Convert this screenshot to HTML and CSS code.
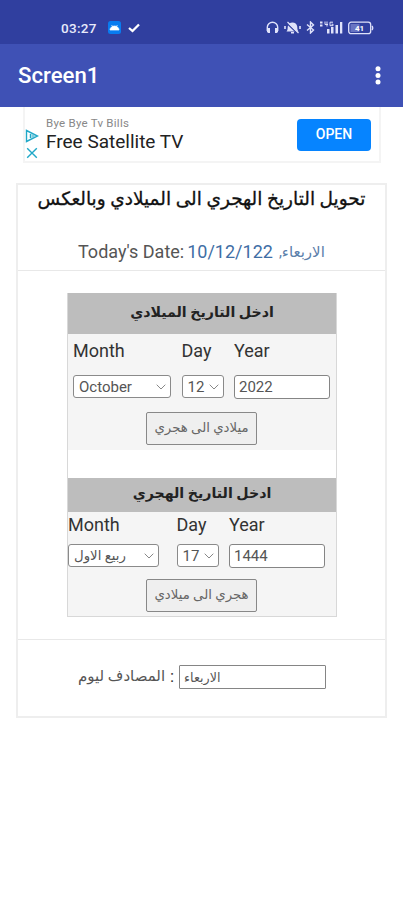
FILE: index.html
```html
<!DOCTYPE html>
<html lang="en">
<head>
    <meta charset="utf-8">
    <title>Screen1</title>
    <link rel="stylesheet" href="styles.css">
</head>
<body>
    <div class="statusbar">
        <span class="clock">03:27</span>
        <svg class="app-icon" width="13" height="13" viewBox="0 0 13 13"><rect width="13" height="13" rx="2.5" fill="#087cf0"/><path d="M2 9a4.5 4 0 0 1 9 0zM3.6 4l1 1.7M9.4 4l-1 1.7" fill="#fff" stroke="#fff" stroke-width=".7"/></svg>
        <svg class="check" width="12" height="10" viewBox="0 0 12 10"><path d="M1 5l3.5 3L11 1.5" fill="none" stroke="#fff" stroke-width="2.3"/></svg>
        <div class="status-right">
            <svg width="13" height="13" viewBox="0 0 13 13"><path d="M1.3 10V6.3a5.2 5 0 0 1 10.4 0V10" fill="none" stroke="#dfe2fa" stroke-width="1.4"/><path d="M1 7h3v5H2.2L1 11zM12 7H9v5h1.8l1.2-1z" fill="#dfe2fa"/></svg>
            <svg width="17" height="13" viewBox="0 0 17 13"><path d="M2.5 10.500c1.500-1.500 1-3.500 1.300-5C4.200 3 6 1.500 8.500 1.500s4.300 1.500 4.700 4c.3 1.500-.2 3.500 1.300 5zM7 11h3v1.500H7z" fill="#dfe2fa"/><path d="M1 5v3M16 5v3" stroke="#dfe2fa" stroke-width="1.6"/><path d="M2.500 2l11 10.500" stroke="#303f9f" stroke-width="1.300"/><path d="M3.500 1l11 11" stroke="#dfe2fa" stroke-width="1.200"/></svg>
            <svg class="bluetooth" width="9" height="13" viewBox="0 0 9 13"><path d="M1 3.500l6.500 5.500-3 3V1l3 3L1 9.500" fill="none" stroke="#dfe2fa" stroke-width="1.400"/></svg>
            <svg class="signal" width="23" height="13" viewBox="0 0 23 13"><g fill="#dfe2fa"><path d="M0 .5h2.500v2H0zM0 3.500h2.500v2H0zM7 8h2.500v4.500H7zM11 6h2.500v6.500H11zM15.500 4h2.500v8.500h-2.500zM20 1h2.300v11.500H20z"/></g><path d="M5 .5v3h3M7 .5v5M13 1.200h-3v3.500h3V3.200h-1.500" fill="none" stroke="#dfe2fa"/></svg>
            <svg width="26" height="14" viewBox="0 0 26 14"><rect x=".7" y="1.200" width="22" height="11.500" rx="2.500" fill="none" stroke="#dfe2fa" stroke-width="1.300"/><rect x="2.500" y="3" width="9" height="8" fill="#6974c2"/><path d="M24 5q1.500 2 0 4" stroke="#dfe2fa" fill="none" stroke-width="1.300"/><text class="battery-text" x="11.500" y="10">41</text></svg>
        </div>
    </div>
    <div class="appbar">
        <span class="app-title">Screen1</span>
        <svg width="6" height="20" viewBox="0 0 6 20"><g fill="#fff"><circle cx="3" cy="3.800" r="2.500"/><circle cx="3" cy="10.500" r="2.500"/><circle cx="3" cy="17" r="2.500"/></g></svg>
    </div>

    <div class="ad">
        <div class="ad-marks">
            <svg width="14" height="14" viewBox="0 0 14 14"><path d="M1.500 1.500v11L12.500 7zM5.500 5v4" fill="none" stroke="#20a8c8" stroke-width="1.400"/><path d="M6.500 4.500v5l4-2.500z" fill="#7dcde0"/></svg>
            <svg width="12" height="12" viewBox="0 0 12 12"><path d="M1.200 1.200l9.600 9.600M10.800 1.200l-9.600 9.600" stroke="#20a8c8" stroke-width="1.400"/></svg>
        </div>
        <div class="ad-text">
            <div class="ad-small">Bye Bye Tv Bills</div>
            <div class="ad-big">Free Satellite TV</div>
        </div>
        <a class="ad-open">OPEN</a>
    </div>

    <div class="card">
        <div class="card-head">
            <h1 class="title" dir="rtl">تحويل التاريخ الهجري الى الميلادي وبالعكس</h1>
            <div class="today"><span>Today's Date:</span><span class="today-date">10/12/122</span><span class="today-day" dir="rtl">الاربعاء,</span></div>
        </div>
        <div class="card-main">
            <div class="panel">
                <h2 class="panel-title" dir="rtl">ادخل التاريخ الميلادي</h2>
                <div class="form">
                    <div class="fields">
                        <span class="label">Month</span><span class="label">Day</span><span class="label">Year</span>
                        <div class="select">October<svg width="10" height="6" viewBox="0 0 10 6"><path d="M.7.7L5 5 9.300.7"/></svg></div>
                        <div class="select">12<svg width="10" height="6" viewBox="0 0 10 6"><path d="M.7.7L5 5 9.300.7"/></svg></div>
                        <input class="input" type="text" value="2022">
                    </div>
                    <button class="convert" dir="rtl">ميلادي الى هجري</button>
                </div>
                <h2 class="panel-title hijri-title" dir="rtl">ادخل التاريخ الهجري</h2>
                <div class="form hijri">
                    <div class="fields">
                        <span class="label">Month</span><span class="label">Day</span><span class="label">Year</span>
                        <div class="select"><span class="month-ar" dir="rtl">ربيع الاول</span><svg width="10" height="6" viewBox="0 0 10 6"><path d="M.7.7L5 5 9.300.7"/></svg></div>
                        <div class="select">17<svg width="10" height="6" viewBox="0 0 10 6"><path d="M.7.7L5 5 9.300.7"/></svg></div>
                        <input class="input" type="text" value="1444">
                    </div>
                    <button class="convert" dir="rtl">هجري الى ميلادي</button>
                </div>
            </div>
        </div>
        <div class="card-foot">
            <span class="foot-label" dir="rtl">المصادف ليوم</span>
            <span class="colon">:</span>
            <input class="input day-input" type="text" value="الاربعاء">
        </div>
    </div>
</body>
</html>
```
FILE: styles.css
```css
* {
    box-sizing: border-box;
}
body {
    margin: 0;
    height: 900px;
    background-color: #fff;
    font-family: Roboto, "DejaVu Sans", sans-serif;
    color: #333;
    overflow: hidden;
}
.statusbar {
    display: flex;
    align-items: center;
    height: 44px;
    padding: 11px 29px 0 61px;
    background-color: #303f9f;
}
.clock {
    width: 47px;
    font-size: 13.5px;
    font-weight: 500;
    letter-spacing: 0.3px;
    color: #e8eafa;
}
.check {
    margin-left: 7px;
}
.status-right {
    display: flex;
    align-items: center;
    gap: 5px;
    margin-left: auto;
}
.battery-text {
    font-size: 8px;
    font-weight: 700;
    fill: #fff;
    text-anchor: middle;
}
.appbar {
    display: flex;
    align-items: center;
    justify-content: space-between;
    height: 63px;
    padding: 0 22px 1px 18px;
    background-color: #3f51b5;
}
.app-title {
    font-size: 22.2px;
    font-weight: 500;
    color: #fff;
}
.ad {
    display: flex;
    width: 358px;
    height: 56px;
    margin-left: 23px;
    border: 2px solid #f4f4f4;
    border-top: 0;
}
.ad-marks {
    display: flex;
    flex-direction: column;
    align-items: center;
    gap: 4px;
    width: 14px;
    padding-top: 22px;
}
.ad-text {
    flex: 1;
    padding: 9px 0 0 7px;
}
.ad-small {
    font-size: 11.5px;
    line-height: 14px;
    letter-spacing: 0.25px;
    color: #888;
}
.ad-big {
    font-size: 19px;
    line-height: 24px;
    color: #222;
}
.ad-open {
    width: 74px;
    height: 32px;
    margin: 12px 8px 0 0;
    border-radius: 4px;
    background-color: #0684ff;
    color: #fff;
    font-size: 14px;
    font-weight: 500;
    line-height: 31px;
    text-align: center;
}
.card {
    width: 371px;
    height: 535px;
    margin: 20px 0 0 16px;
    border: 2px solid #eee;
}
.card-head {
    height: 86px;
    border-bottom: 1px solid #e8e8e8;
}
.title {
    margin: 0;
    font-size: 18.5px;
    font-weight: 500;
    line-height: 28px;
    text-align: center;
    white-space: nowrap;
    color: #111;
    -webkit-text-stroke: 0.3px #111;
}
.today {
    display: flex;
    padding: 24px 0 0 60px;
    font-size: 18px;
    line-height: 30px;
    color: #555;
}
.today-date {
    margin-left: 3px;
    color: #3f6ea5;
}
.today-day {
    margin-left: 6px;
    font-size: 15px;
    color: #5b80ab;
}
.card-main {
    height: 369px;
    padding: 22px 0 0 49px;
    border-bottom: 1px solid #e8e8e8;
}
.panel {
    width: 270px;
    height: 324px;
    border: 1px solid #d8d8d8;
    border-top: 0;
}
.panel-title {
    height: 41px;
    margin: 0;
    background-color: #bdbdbd;
    font-size: 14.2px;
    font-weight: 700;
    line-height: 38px;
    text-align: center;
    color: #222;
}
.form {
    height: 116px;
    padding: 1px 0 0 5px;
    background-color: #f5f5f5;
}
.fields {
    display: grid;
    grid-template-columns: 98px 42px 96px;
    grid-template-rows: 40px 24px;
    column-gap: 10.5px;
}
.label {
    font-size: 18px;
    line-height: 32px;
    color: #333;
}
.select {
    display: flex;
    align-items: center;
    justify-content: space-between;
    height: 23px;
    padding: 0 4px 0 5px;
    border: 1px solid #8a8a8a;
    border-radius: 3px;
    background-color: #fff;
    font-size: 15px;
    color: #555;
}
.select svg path {
    fill: none;
    stroke: #888;
    stroke-width: 1;
}
.input {
    width: 96px;
    height: 24px;
    padding: 0 4px;
    border: 1px solid #858585;
    border-radius: 3px;
    background-color: #fff;
    font-family: inherit;
    font-size: 15px;
    color: #555;
}
.convert {
    display: block;
    width: 111px;
    height: 33px;
    margin: 13px 0 0 73px;
    padding: 0 0 2px;
    border: 1px solid #888;
    border-radius: 2px;
    background-color: #efefef;
    font-family: inherit;
    font-size: 13.3px;
    white-space: nowrap;
    color: #666;
}
.hijri-title {
    height: 34px;
    margin-top: 28px;
    line-height: 30px;
}
.hijri {
    height: 104px;
    padding: 0;
}
.hijri .fields {
    grid-template-columns: 91px 42px 96px;
    grid-template-rows: 32px 24px;
    column-gap: 17.5px;
}
.hijri .fields > :nth-child(3n) {
    margin-left: -7px;
}
.hijri .label {
    line-height: 25px;
}
.hijri .convert {
    margin: 11px 0 0 78px;
}
.month-ar {
    font-size: 13.3px;
    white-space: nowrap;
}
.card-foot {
    display: flex;
    padding: 25px 0 0 60px;
    line-height: 22px;
}
.foot-label {
    font-size: 15px;
    white-space: nowrap;
    color: #555;
}
.colon {
    width: 14px;
    text-align: center;
    font-size: 17px;
}
.day-input {
    width: 147px;
    border-radius: 1px;
    font-size: 12.7px;
}
```
